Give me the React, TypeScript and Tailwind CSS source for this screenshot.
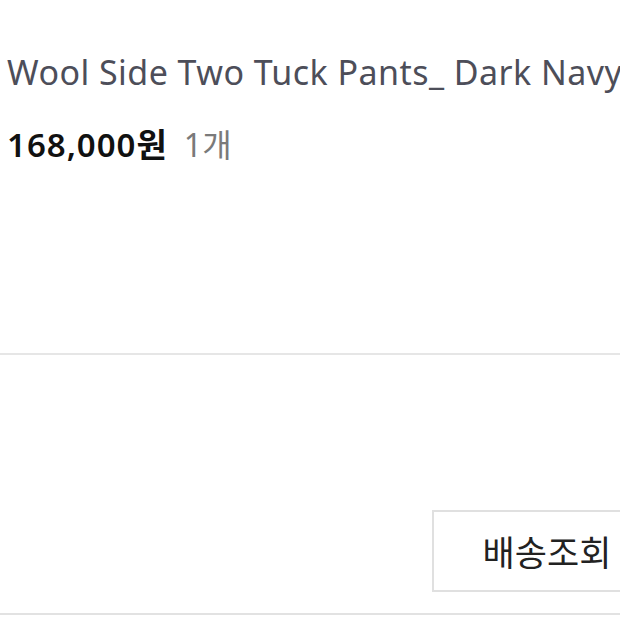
import React from "react";

export default function App() {
  return (
    <div
      className="w-[620px] h-[620px] overflow-hidden bg-white flex flex-col"
      style={{ fontFamily: '"Noto Sans", "Noto Sans CJK KR", sans-serif' }}
    >
      <div className="shrink-0 pl-[7px] pt-[47px] whitespace-nowrap text-[34px] leading-[50px] tracking-[0.45px] text-[#4d4e59]">
        Wool Side Two Tuck Pants_ Dark Navy
      </div>
      <div className="shrink-0 pl-[7px] mt-[25px] whitespace-nowrap flex items-baseline leading-[46px]">
        <span className="text-[33px] font-semibold text-[#111] tracking-[1px]">168,000원</span>
        <span className="ml-[16px] text-[32px] text-[#7a7a7a]">1개</span>
      </div>
      <div className="shrink-0 mt-[185px] h-[2px] bg-[#e6e6e6]" />
      <div className="shrink-0 flex justify-end pt-[155px]">
        <div className="w-[230px] h-[82px] -mr-[42px] shrink-0 border-2 border-[#e0e0e0] flex items-center justify-center">
          <span
            className="text-[35px] text-[#222]"
            style={{ fontFamily: '"Noto Sans CJK KR", sans-serif' }}
          >
            배송조회
          </span>
        </div>
      </div>
      <div className="shrink-0 mt-[21px] h-[2px] bg-[#e2e2e2]" />
    </div>
  );
}
